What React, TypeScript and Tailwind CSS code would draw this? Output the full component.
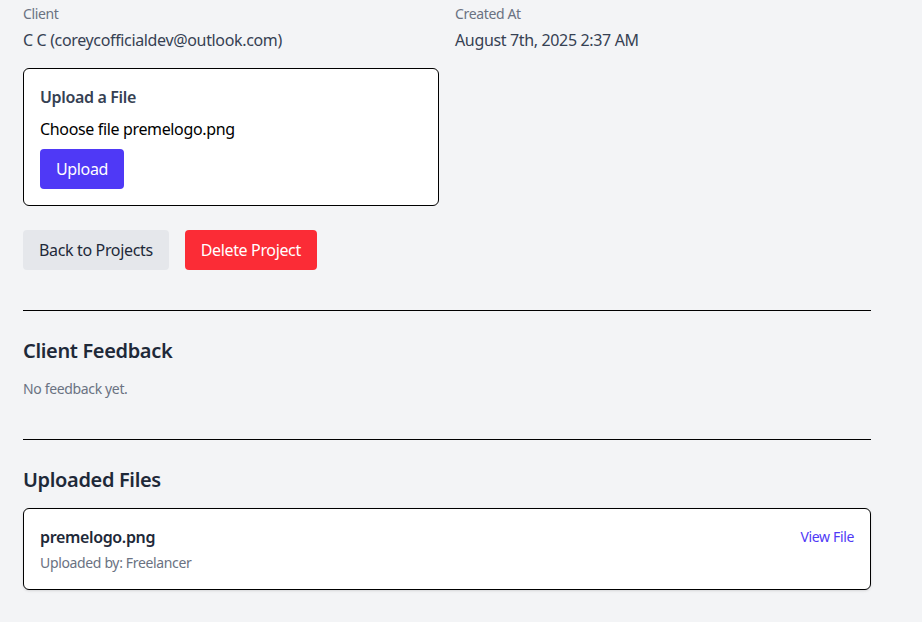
import React from 'react';

export default function App() {
  return (
    <div className="min-h-screen bg-gray-100 font-['Segoe_UI','Noto_Sans',sans-serif] tracking-[-0.35px]">
      <div className="w-[848px] ml-[23px] pt-1">
        <div className="grid grid-cols-2 gap-4">
          <div>
            <div className="text-sm text-gray-500">Client</div>
            <div className="mt-1 text-base text-gray-700">C C (coreycofficialdev@outlook.com)</div>
          </div>
          <div>
            <div className="text-sm text-gray-500">Created At</div>
            <div className="mt-1 text-base text-gray-700">August 7th, 2025 2:37 AM</div>
          </div>
        </div>

        <div className="mt-4 w-[416px] rounded-md border border-black bg-white p-4">
          <h3 className="font-semibold text-gray-700">Upload a File</h3>
          <div className="mt-2 text-black">Choose file premelogo.png</div>
          <button className="mt-2 rounded bg-indigo-600 px-4 py-2 text-white">Upload</button>
        </div>

        <div className="mt-6 flex gap-4">
          <button className="rounded bg-gray-200 px-4 py-2 text-gray-800">Back to Projects</button>
          <button className="rounded bg-red-500 px-4 py-2 text-white">Delete Project</button>
        </div>

        <hr className="mt-10 border-black" />
        <h2 className="mt-[26px] text-xl font-semibold text-gray-800">Client Feedback</h2>
        <p className="mt-[14px] text-sm text-gray-500">No feedback yet.</p>

        <hr className="mt-10 border-black" />
        <h2 className="mt-[26px] text-xl font-semibold text-gray-800">Uploaded Files</h2>
        <div className="mt-[14px] rounded-md border border-black bg-white p-4 shadow">
          <div className="flex items-center justify-between">
            <div className="font-semibold text-gray-800">premelogo.png</div>
            <a href="#" className="text-sm text-indigo-600">View File</a>
          </div>
          <div className="mt-1 text-sm text-gray-500">Uploaded by: Freelancer</div>
        </div>
      </div>
    </div>
  );
}
